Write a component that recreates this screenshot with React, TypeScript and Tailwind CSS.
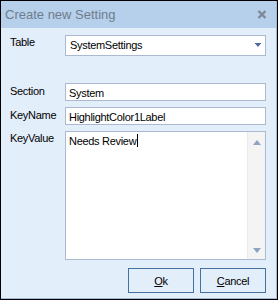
const fields = [
  { label: "Section", value: "System" },
  { label: "KeyName", value: "HighlightColor1Label" },
];

function ScrollArrow({ up }: { up?: boolean }) {
  return (
    <svg width="8" height="5" viewBox="0 0 8 5" className="text-[#8ea3bf]">
      {up ? (
        <path d="M0 5 L4 0 L8 5 Z" fill="currentColor" />
      ) : (
        <path d="M0 0 L8 0 L4 5 Z" fill="currentColor" />
      )}
    </svg>
  );
}

export default function App() {
  return (
    <div className="flex h-[300px] w-[278px] flex-col border border-black bg-[#e3eefb] font-['Liberation_Sans',Arial,sans-serif] text-[11px] tracking-[-0.3px] text-black">
      <div className="flex h-full flex-col border-r border-b border-[#a3b8d4]">
        {/* title bar */}
        <div className="flex h-[27px] shrink-0 items-center justify-between bg-[#b6cfea] pr-[9px] pl-[4px]">
          <span className="text-[13px] tracking-normal text-[#6e7d8e]">
            Create new Setting
          </span>
          <svg width="10" height="9" viewBox="0 0 10 9">
            <path
              d="M1.5 1 L8.5 8 M8.5 1 L1.5 8"
              stroke="#7f8996"
              strokeWidth="2.4"
            />
          </svg>
        </div>

        <div className="flex flex-1 flex-col pt-[7px] pr-[10px] pl-[9px]">
          <div className="flex items-start">
            <span className="w-[55px] shrink-0 leading-[14px]">Table</span>
            <div className="flex h-[21px] flex-1 items-center justify-between border border-[#abbad0] bg-white pr-[4px] pl-[4px]">
              <span>SystemSettings</span>
              <svg width="6" height="5" viewBox="0 0 6 5">
                <path d="M0 0 H6 V1 H0 Z M0.5 1 H5.5 L3 4 Z" fill="#4d6c9c" />
              </svg>
            </div>
          </div>

          <div className="mt-[27px] flex flex-col gap-[6px]">
            {fields.map((f) => (
              <div key={f.label} className="flex items-start">
                <span className="w-[55px] shrink-0 pt-[1px] leading-[14px]">
                  {f.label}
                </span>
                <div className="h-[18px] flex-1 border border-[#abbad0] bg-white pt-[2px] pl-[3px] leading-[14px]">
                  {f.value}
                </div>
              </div>
            ))}
            <div className="flex items-start">
              <span className="w-[55px] shrink-0 leading-[14px]">KeyValue</span>
              <div className="flex h-[129px] flex-1 border border-[#abbad0] bg-white">
                <div className="flex flex-1 items-start pt-[2px] pl-[3px] leading-[14px]">
                  Needs Review
                  <span className="ml-[1px] inline-block h-[13px] w-[1px] bg-black" />
                </div>
                <div className="flex w-[18px] flex-col items-center justify-between border-l border-[#ebebeb] bg-[#f4f4f4] pt-[8px] pb-[6px]">
                  <ScrollArrow up />
                  <ScrollArrow />
                </div>
              </div>
            </div>
          </div>

          <div className="mt-[8px] flex justify-end gap-[6px]">
            <button className="flex h-[25px] w-[66px] items-center justify-center border border-[#44719e] bg-[#e3eefb] leading-[14px]">
              <span>
                <span className="underline">O</span>k
              </span>
            </button>
            <button className="flex h-[25px] w-[66px] items-center justify-center border border-[#44719e] bg-[#e3eefb] leading-[14px]">
              <span>
                <span className="underline">C</span>ancel
              </span>
            </button>
          </div>
        </div>
      </div>
    </div>
  );
}
